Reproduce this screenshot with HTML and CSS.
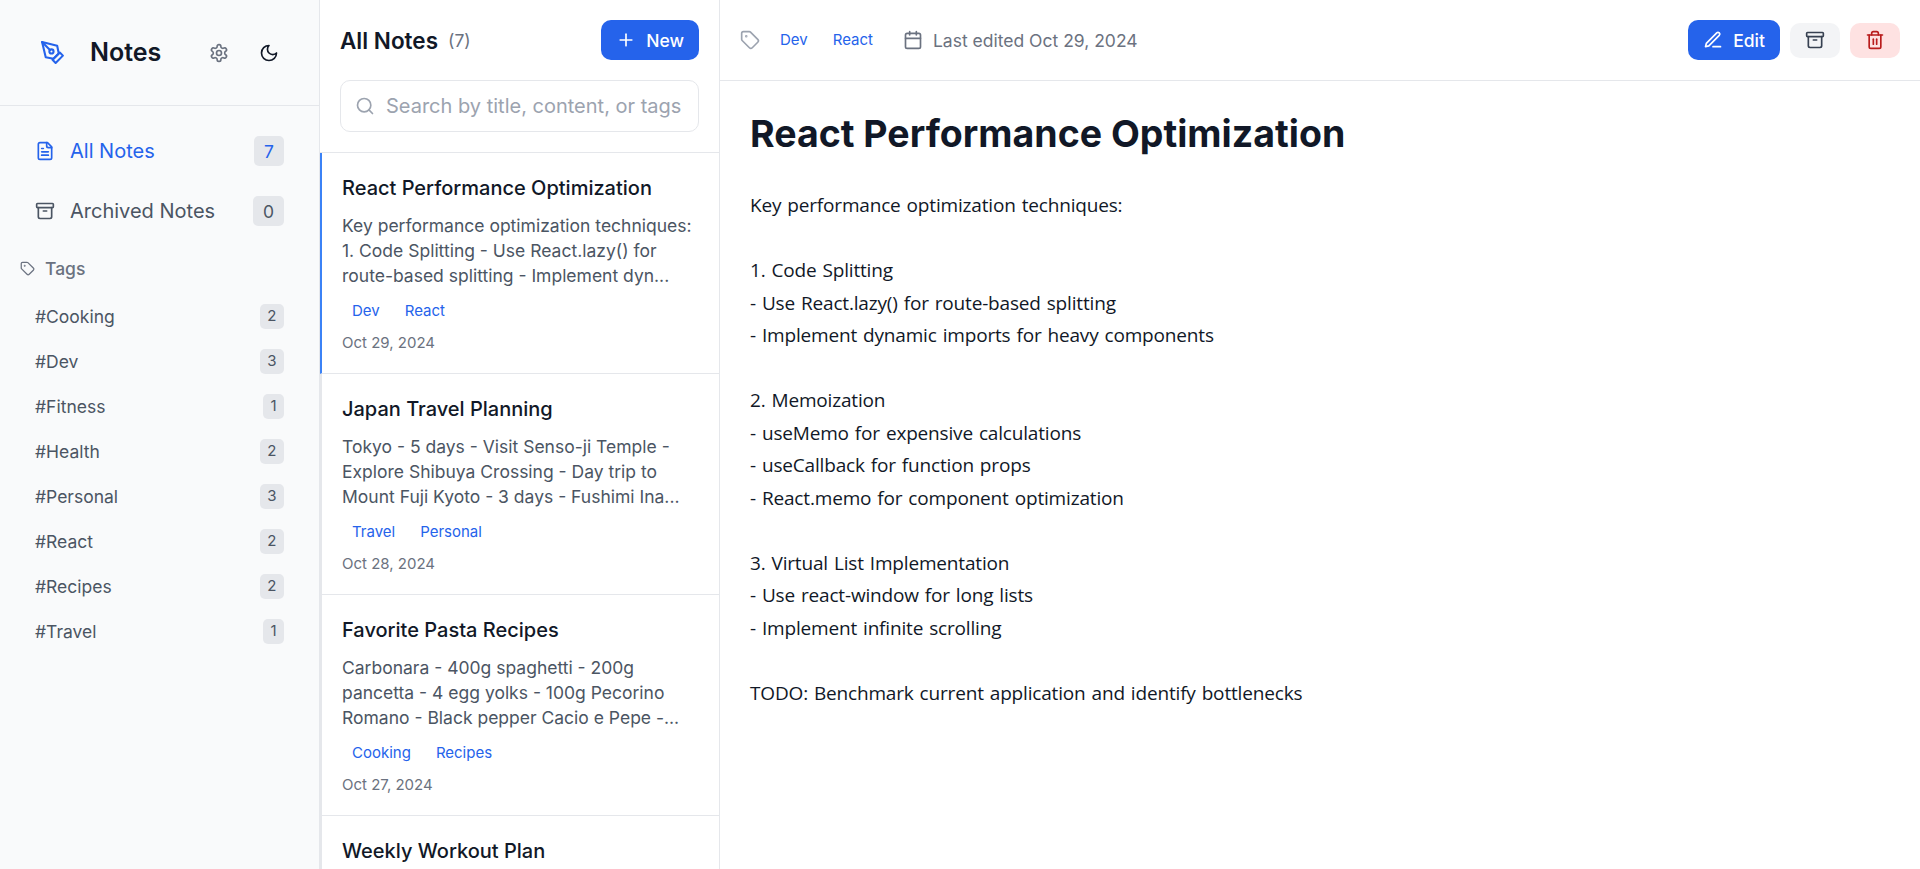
FILE: index.html
```html
<!DOCTYPE html>
<html lang="en">
<head>
<meta charset="utf-8">
<title>Notes</title>
<link rel="stylesheet" href="styles.css">
</head>
<body>
<svg width="0" height="0" class="sprite" aria-hidden="true">
  <symbol id="i-pen-tool" viewBox="0 0 24 24"><path d="m12 19 7-7 3 3-7 7-3-3z"/><path d="m18 13-1.5-7.5L2 2l3.5 14.5L13 18l5-5z"/><path d="m2 2 7.586 7.586"/><circle cx="11" cy="11" r="2"/></symbol>
  <symbol id="i-settings" viewBox="0 0 24 24"><path d="M12.22 2h-.44a2 2 0 0 0-2 2v.18a2 2 0 0 1-1 1.73l-.43.25a2 2 0 0 1-2 0l-.15-.08a2 2 0 0 0-2.73.73l-.22.38a2 2 0 0 0 .73 2.73l.15.1a2 2 0 0 1 1 1.72v.51a2 2 0 0 1-1 1.74l-.15.09a2 2 0 0 0-.73 2.73l.22.38a2 2 0 0 0 2.73.73l.15-.08a2 2 0 0 1 2 0l.43.25a2 2 0 0 1 1 1.73V20a2 2 0 0 0 2 2h.44a2 2 0 0 0 2-2v-.18a2 2 0 0 1 1-1.73l.43-.25a2 2 0 0 1 2 0l.15.08a2 2 0 0 0 2.73-.73l.22-.39a2 2 0 0 0-.73-2.73l-.15-.08a2 2 0 0 1-1-1.74v-.5a2 2 0 0 1 1-1.74l.15-.09a2 2 0 0 0 .73-2.73l-.22-.38a2 2 0 0 0-2.73-.73l-.15.08a2 2 0 0 1-2 0l-.43-.25a2 2 0 0 1-1-1.73V4a2 2 0 0 0-2-2z"/><circle cx="12" cy="12" r="3"/></symbol>
  <symbol id="i-moon" viewBox="0 0 24 24"><path d="M12 3a6 6 0 0 0 9 9 9 9 0 1 1-9-9Z"/></symbol>
  <symbol id="i-file" viewBox="0 0 24 24"><path d="M15 2H6a2 2 0 0 0-2 2v16a2 2 0 0 0 2 2h12a2 2 0 0 0 2-2V7Z"/><path d="M14 2v4a2 2 0 0 0 2 2h4"/><path d="M10 9H8"/><path d="M16 13H8"/><path d="M16 17H8"/></symbol>
  <symbol id="i-archive" viewBox="0 0 24 24"><rect width="20" height="5" x="2" y="3" rx="1"/><path d="M4 8v11a2 2 0 0 0 2 2h12a2 2 0 0 0 2-2V8"/><path d="M10 12h4"/></symbol>
  <symbol id="i-tag" viewBox="0 0 24 24"><path d="M12.586 2.586A2 2 0 0 0 11.172 2H4a2 2 0 0 0-2 2v7.172a2 2 0 0 0 .586 1.414l8.704 8.704a2.426 2.426 0 0 0 3.42 0l6.58-6.58a2.426 2.426 0 0 0 0-3.42z"/><circle cx="7.5" cy="7.5" r=".5" fill="currentColor"/></symbol>
  <symbol id="i-plus" viewBox="0 0 24 24"><path d="M5 12h14"/><path d="M12 5v14"/></symbol>
  <symbol id="i-search" viewBox="0 0 24 24"><circle cx="11" cy="11" r="8"/><path d="m21 21-4.3-4.3"/></symbol>
  <symbol id="i-calendar" viewBox="0 0 24 24"><path d="M8 2v4"/><path d="M16 2v4"/><rect width="18" height="18" x="3" y="4" rx="2"/><path d="M3 10h18"/></symbol>
  <symbol id="i-pen-line" viewBox="0 0 24 24"><path d="M12 20h9"/><path d="M16.5 3.5a2.12 2.12 0 0 1 3 3L7 19l-4 1 1-4Z"/></symbol>
  <symbol id="i-trash" viewBox="0 0 24 24"><path d="M3 6h18"/><path d="M19 6v14c0 1-1 2-2 2H7c-1 0-2-1-2-2V6"/><path d="M8 6V4c0-1 1-2 2-2h4c1 0 2 1 2 2v2"/><path d="M10 11v6"/><path d="M14 11v6"/></symbol>
</svg>
<div class="app">
  <aside class="sidebar">
    <header class="brand">
      <svg class="icon logo"><use href="#i-pen-tool"/></svg>
      <h1 class="brand-name">Notes</h1>
      <div class="brand-actions">
        <button class="icon-btn"><svg class="icon"><use href="#i-settings"/></svg></button>
        <button class="icon-btn dark"><svg class="icon"><use href="#i-moon"/></svg></button>
      </div>
    </header>
    <nav class="nav">
      <a class="nav-item active"><svg class="icon"><use href="#i-file"/></svg><span>All Notes</span><span class="count">7</span></a>
      <a class="nav-item"><svg class="icon"><use href="#i-archive"/></svg><span>Archived Notes</span><span class="count">0</span></a>
    </nav>
    <section class="tags">
      <h2 class="tags-title"><svg class="icon"><use href="#i-tag"/></svg>Tags</h2>
      <ul class="tag-list">
        <li class="tag-row">#Cooking<span class="tag-count">2</span></li>
        <li class="tag-row">#Dev<span class="tag-count">3</span></li>
        <li class="tag-row">#Fitness<span class="tag-count">1</span></li>
        <li class="tag-row">#Health<span class="tag-count">2</span></li>
        <li class="tag-row">#Personal<span class="tag-count">3</span></li>
        <li class="tag-row">#React<span class="tag-count">2</span></li>
        <li class="tag-row">#Recipes<span class="tag-count">2</span></li>
        <li class="tag-row">#Travel<span class="tag-count">1</span></li>
      </ul>
    </section>
  </aside>

  <section class="list">
    <header class="list-head">
      <div class="list-bar">
        <h2 class="list-title">All Notes</h2><span class="list-total">(7)</span>
        <button class="btn primary new"><svg class="icon"><use href="#i-plus"/></svg>New</button>
      </div>
      <label class="search"><svg class="icon"><use href="#i-search"/></svg><input type="text" placeholder="Search by title, content, or tags"></label>
    </header>
    <div class="notes">
      <article class="note selected">
        <h3 class="note-title">React Performance Optimization</h3>
        <p class="excerpt">Key performance optimization techniques: 1. Code Splitting - Use React.lazy() for route-based splitting - Implement dyn...</p>
        <div class="chips"><span class="chip">Dev</span><span class="chip">React</span></div>
        <time class="date">Oct 29, 2024</time>
      </article>
      <article class="note">
        <h3 class="note-title">Japan Travel Planning</h3>
        <p class="excerpt">Tokyo - 5 days - Visit Senso-ji Temple - Explore Shibuya Crossing - Day trip to Mount Fuji Kyoto - 3 days - Fushimi Ina...</p>
        <div class="chips"><span class="chip">Travel</span><span class="chip">Personal</span></div>
        <time class="date">Oct 28, 2024</time>
      </article>
      <article class="note">
        <h3 class="note-title">Favorite Pasta Recipes</h3>
        <p class="excerpt">Carbonara - 400g spaghetti - 200g pancetta - 4 egg yolks - 100g Pecorino Romano - Black pepper Cacio e Pepe -...</p>
        <div class="chips"><span class="chip">Cooking</span><span class="chip">Recipes</span></div>
        <time class="date">Oct 27, 2024</time>
      </article>
      <article class="note">
        <h3 class="note-title">Weekly Workout Plan</h3>
      </article>
    </div>
  </section>

  <main class="editor">
    <header class="toolbar">
      <svg class="icon muted"><use href="#i-tag"/></svg>
      <div class="chips"><span class="chip">Dev</span><span class="chip">React</span></div>
      <div class="edited"><svg class="icon"><use href="#i-calendar"/></svg><span class="edited-text">Last edited Oct 29, 2024</span></div>
      <div class="actions">
        <button class="btn primary"><svg class="icon"><use href="#i-pen-line"/></svg>Edit</button>
        <button class="btn small"><svg class="icon"><use href="#i-archive"/></svg></button>
        <button class="btn small danger"><svg class="icon"><use href="#i-trash"/></svg></button>
      </div>
    </header>
    <article class="document">
      <h1 class="doc-title">React Performance Optimization</h1>
      <div class="doc-body">Key performance optimization techniques:

1. Code Splitting
- Use React.lazy() for route-based splitting
- Implement dynamic imports for heavy components

2. Memoization
- useMemo for expensive calculations
- useCallback for function props
- React.memo for component optimization

3. Virtual List Implementation
- Use react-window for long lists
- Implement infinite scrolling

TODO: Benchmark current application and identify bottlenecks</div>
    </article>
  </main>
</div>
</body>
</html>
```
FILE: styles.css
```css
* { box-sizing: border-box; margin: 0; padding: 0; }
body { font-family: Inter, "Liberation Sans", sans-serif; font-size: 20px; line-height: 30px; color: #111827; background: #fff; overflow: hidden; }
button { font: inherit; color: inherit; border: 0; background: none; }
ul { list-style: none; }
.sprite { position: absolute; }
.icon { display: block; flex: none; width: 20px; height: 20px; fill: none; stroke: currentColor; stroke-width: 2; stroke-linecap: round; stroke-linejoin: round; }

.app { display: flex; height: 869px; overflow: hidden; }

/* Sidebar */
.sidebar { width: 320px; flex: none; background: #f9fafb; border-right: 1px solid #e5e7eb; }
.brand { display: flex; align-items: center; height: 106px; padding: 0 40px; border-bottom: 1px solid #e5e7eb; }
.logo { width: 25px; height: 25px; color: #2563eb; }
.brand-name { margin-left: 25px; font-size: 25px; font-weight: 600; line-height: 35px; }
.brand-actions { display: flex; gap: 30px; margin-left: auto; }
.icon-btn { color: #6b7280; }
.icon-btn.dark { color: #111827; }
.nav { display: flex; flex-direction: column; gap: 10px; padding: 20px 20px 0; }
.nav-item { display: flex; align-items: center; gap: 15px; height: 50px; padding: 0 15px; color: #4b5563; }
.nav-item.active { color: #2563eb; }
.count { margin-left: auto; padding: 2.5px 10px; font-size: 17.5px; line-height: 25px; background: #e5e7eb; border-radius: 5px; }
.tags { padding: 20px 20px 0; }
.tags-title { display: flex; align-items: center; gap: 10px; font-size: 17.5px; font-weight: 500; line-height: 25px; color: #6b7280; }
.tags-title .icon { width: 15px; height: 15px; }
.tag-list { padding-top: 13px; }
.tag-row { display: flex; align-items: center; justify-content: space-between; height: 45px; padding: 0 15px; font-size: 17.5px; color: #4b5563; }
.tag-count { padding: 2px 7.5px 3px; font-size: 15px; line-height: 20px; background: #e5e7eb; border-radius: 5px; }

/* Note list */
.list { width: 400px; flex: none; border-right: 1px solid #e5e7eb; overflow: hidden; }
.list-head { padding: 20px; border-bottom: 1px solid #e5e7eb; }
.list-bar { display: flex; align-items: center; }
.list-title { font-size: 22.5px; font-weight: 600; line-height: 35px; }
.list-total { margin-left: 10px; padding-top: 1px; font-size: 17.5px; color: #6b7280; }
.btn { display: flex; align-items: center; gap: 10px; height: 40px; padding: 0 15px; border-radius: 10px; font-size: 17.5px; font-weight: 500; line-height: 25px; }
.primary { color: #fff; background: #2563eb; }
.small { height: 35px; color: #374151; background: #f3f4f6; }
.danger { color: #b91c1c; background: #fee2e2; }
.new { margin-left: auto; }
.search { display: flex; align-items: center; gap: 11px; height: 52px; margin-top: 20px; padding: 0 14px; border: 1px solid #e5e7eb; border-radius: 10px; color: #9ca3af; }
.search input { flex: 1; min-width: 0; border: 0; outline: 0; background: none; font: inherit; }
.search input::placeholder { color: #9ca3af; opacity: 1; }
.note { padding: 20px; border-left: 2px solid #e5e7eb; border-bottom: 1px solid #e5e7eb; }
.note.selected { border-left-color: #3b82f6; }
.note-title { font-size: 20px; font-weight: 500; line-height: 30px; }
.excerpt { margin: 10px 0; font-size: 17.5px; line-height: 25px; color: #4b5563; }
.chips { display: flex; gap: 5px; }
.chip { padding: 2.5px 10px; font-size: 15px; line-height: 20px; color: #2563eb; }
.date { display: block; margin-top: 10px; font-size: 15px; line-height: 20px; color: #6b7280; }

/* Editor */
.editor { flex: 1; min-width: 0; }
.toolbar { display: flex; align-items: center; height: 81px; padding: 0 20px; border-bottom: 1px solid #e5e7eb; }
.muted { color: #9ca3af; }
.toolbar .chips { margin-left: 10px; }
.edited { display: flex; align-items: center; gap: 10px; margin-left: 20px; font-size: 17.5px; color: #6b7280; }
.edited-text { padding-top: 2px; }
.actions { display: flex; align-items: center; gap: 10px; margin-left: auto; }
.document { padding: 30px; }
.doc-title { font-size: 37.5px; font-weight: 700; line-height: 45px; }
.doc-body { margin-top: 33px; font-family: "Open Sans", "Noto Sans", sans-serif; font-size: 19px; line-height: 32.5px; letter-spacing: -0.17px; word-spacing: 1.2px; white-space: pre-wrap; }
```
